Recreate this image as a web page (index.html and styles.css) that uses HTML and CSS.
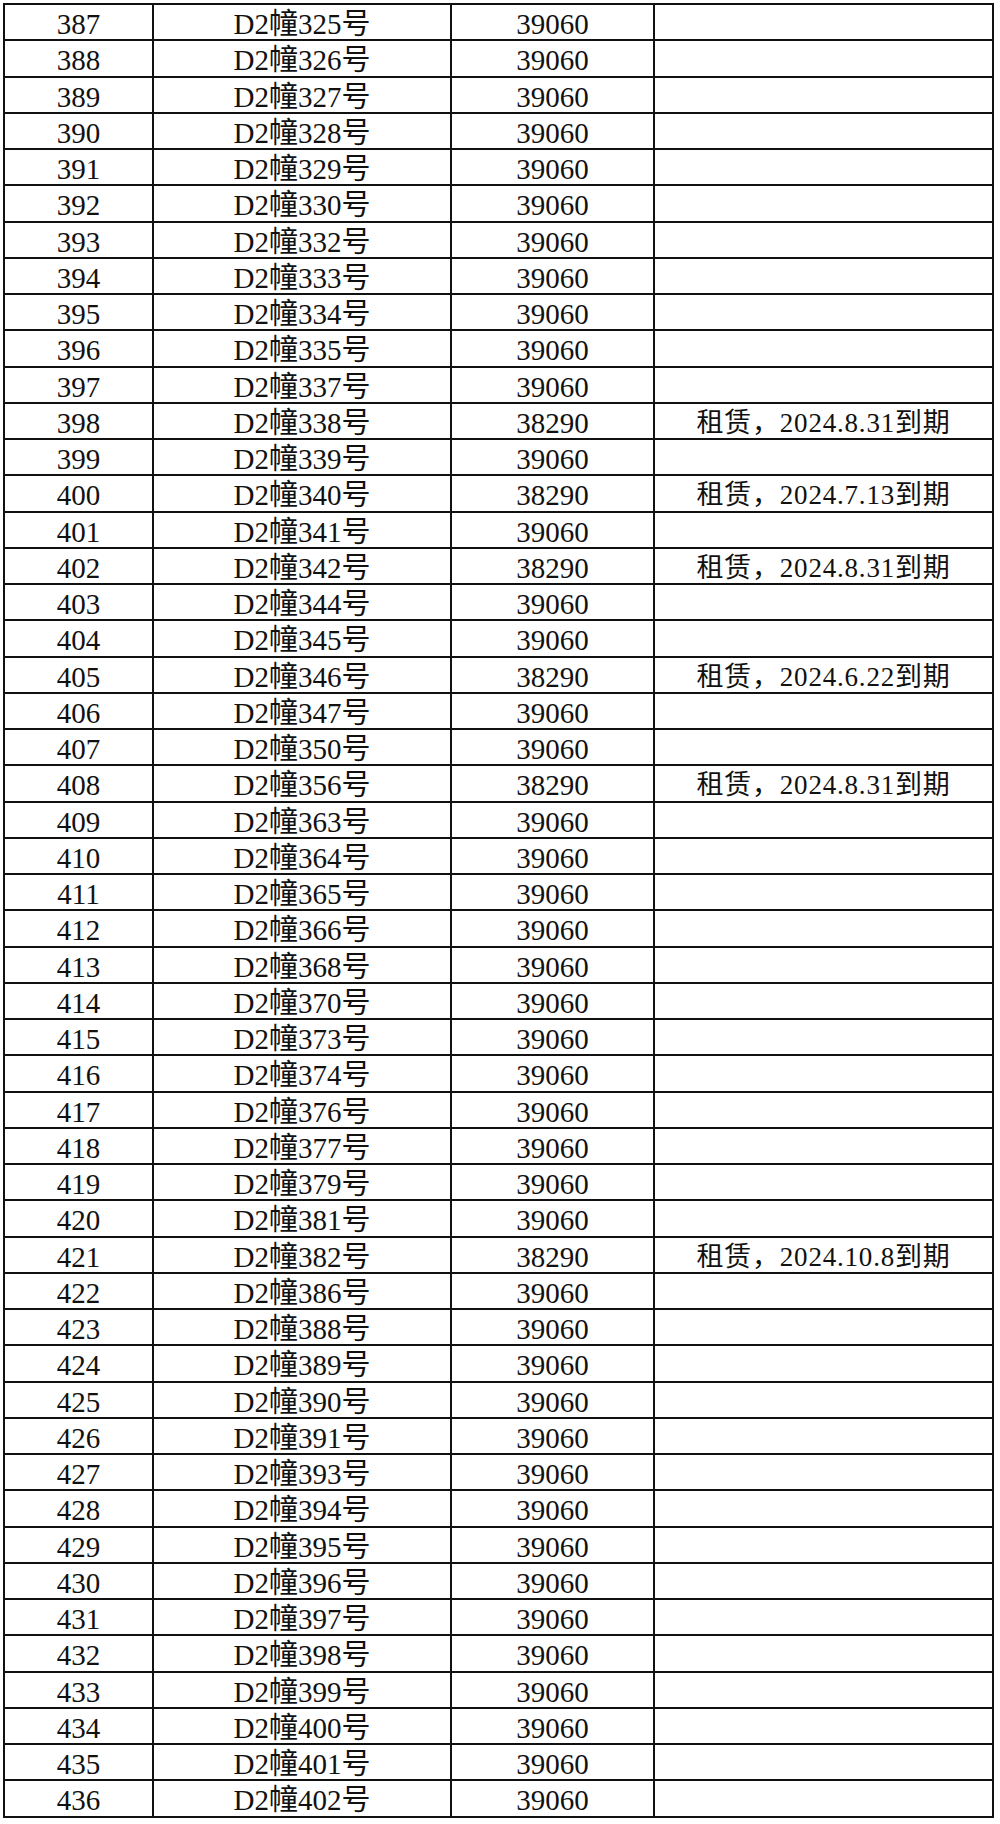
FILE: index.html
```html
<!DOCTYPE html>
<html lang="zh">
<head>
<meta charset="utf-8">
<title>D2幢</title>
<link rel="stylesheet" href="styles.css">
</head>
<body>
<table class="sheet">
<colgroup><col class="c-no"><col class="c-room"><col class="c-price"><col class="c-note"></colgroup>
<tbody>
<tr><td>387</td><td>D2幢325号</td><td>39060</td><td class="note"></td></tr>
<tr><td>388</td><td>D2幢326号</td><td>39060</td><td class="note"></td></tr>
<tr><td>389</td><td>D2幢327号</td><td>39060</td><td class="note"></td></tr>
<tr><td>390</td><td>D2幢328号</td><td>39060</td><td class="note"></td></tr>
<tr><td>391</td><td>D2幢329号</td><td>39060</td><td class="note"></td></tr>
<tr><td>392</td><td>D2幢330号</td><td>39060</td><td class="note"></td></tr>
<tr><td>393</td><td>D2幢332号</td><td>39060</td><td class="note"></td></tr>
<tr><td>394</td><td>D2幢333号</td><td>39060</td><td class="note"></td></tr>
<tr><td>395</td><td>D2幢334号</td><td>39060</td><td class="note"></td></tr>
<tr><td>396</td><td>D2幢335号</td><td>39060</td><td class="note"></td></tr>
<tr><td>397</td><td>D2幢337号</td><td>39060</td><td class="note"></td></tr>
<tr><td>398</td><td>D2幢338号</td><td>38290</td><td class="note">租赁，2024.8.31到期</td></tr>
<tr><td>399</td><td>D2幢339号</td><td>39060</td><td class="note"></td></tr>
<tr><td>400</td><td>D2幢340号</td><td>38290</td><td class="note">租赁，2024.7.13到期</td></tr>
<tr><td>401</td><td>D2幢341号</td><td>39060</td><td class="note"></td></tr>
<tr><td>402</td><td>D2幢342号</td><td>38290</td><td class="note">租赁，2024.8.31到期</td></tr>
<tr><td>403</td><td>D2幢344号</td><td>39060</td><td class="note"></td></tr>
<tr><td>404</td><td>D2幢345号</td><td>39060</td><td class="note"></td></tr>
<tr><td>405</td><td>D2幢346号</td><td>38290</td><td class="note">租赁，2024.6.22到期</td></tr>
<tr><td>406</td><td>D2幢347号</td><td>39060</td><td class="note"></td></tr>
<tr><td>407</td><td>D2幢350号</td><td>39060</td><td class="note"></td></tr>
<tr><td>408</td><td>D2幢356号</td><td>38290</td><td class="note">租赁，2024.8.31到期</td></tr>
<tr><td>409</td><td>D2幢363号</td><td>39060</td><td class="note"></td></tr>
<tr><td>410</td><td>D2幢364号</td><td>39060</td><td class="note"></td></tr>
<tr><td>411</td><td>D2幢365号</td><td>39060</td><td class="note"></td></tr>
<tr><td>412</td><td>D2幢366号</td><td>39060</td><td class="note"></td></tr>
<tr><td>413</td><td>D2幢368号</td><td>39060</td><td class="note"></td></tr>
<tr><td>414</td><td>D2幢370号</td><td>39060</td><td class="note"></td></tr>
<tr><td>415</td><td>D2幢373号</td><td>39060</td><td class="note"></td></tr>
<tr><td>416</td><td>D2幢374号</td><td>39060</td><td class="note"></td></tr>
<tr><td>417</td><td>D2幢376号</td><td>39060</td><td class="note"></td></tr>
<tr><td>418</td><td>D2幢377号</td><td>39060</td><td class="note"></td></tr>
<tr><td>419</td><td>D2幢379号</td><td>39060</td><td class="note"></td></tr>
<tr><td>420</td><td>D2幢381号</td><td>39060</td><td class="note"></td></tr>
<tr><td>421</td><td>D2幢382号</td><td>38290</td><td class="note">租赁，2024.10.8到期</td></tr>
<tr><td>422</td><td>D2幢386号</td><td>39060</td><td class="note"></td></tr>
<tr><td>423</td><td>D2幢388号</td><td>39060</td><td class="note"></td></tr>
<tr><td>424</td><td>D2幢389号</td><td>39060</td><td class="note"></td></tr>
<tr><td>425</td><td>D2幢390号</td><td>39060</td><td class="note"></td></tr>
<tr><td>426</td><td>D2幢391号</td><td>39060</td><td class="note"></td></tr>
<tr><td>427</td><td>D2幢393号</td><td>39060</td><td class="note"></td></tr>
<tr><td>428</td><td>D2幢394号</td><td>39060</td><td class="note"></td></tr>
<tr><td>429</td><td>D2幢395号</td><td>39060</td><td class="note"></td></tr>
<tr><td>430</td><td>D2幢396号</td><td>39060</td><td class="note"></td></tr>
<tr><td>431</td><td>D2幢397号</td><td>39060</td><td class="note"></td></tr>
<tr><td>432</td><td>D2幢398号</td><td>39060</td><td class="note"></td></tr>
<tr><td>433</td><td>D2幢399号</td><td>39060</td><td class="note"></td></tr>
<tr><td>434</td><td>D2幢400号</td><td>39060</td><td class="note"></td></tr>
<tr><td>435</td><td>D2幢401号</td><td>39060</td><td class="note"></td></tr>
<tr><td>436</td><td>D2幢402号</td><td>39060</td><td class="note"></td></tr>
</tbody>
</table>
</body>
</html>
```
FILE: styles.css
```css
html, body {
  margin: 0;
  padding: 0;
  background: #ffffff;
}

body {
  padding: 3px 0 0 3px;
  font-family: "Liberation Serif", "Noto Sans CJK SC", serif;
  color: #111;
}

.sheet {
  border-collapse: collapse;
  table-layout: fixed;
  width: 991px;
  border: 2px solid #111;
}

.c-no { width: 149px; }
.c-room { width: 298px; }
.c-price { width: 203px; }
.c-note { width: 339px; }

.sheet tr {
  height: 36.25px;
}

.sheet td {
  border: 2px solid #111;
  padding: 4px 0 0 0;
  text-align: center;
  vertical-align: middle;
  font-size: 29px;
  line-height: 30px;
  white-space: nowrap;
  overflow: hidden;
}

.sheet td.note {
  font-size: 27px;
  letter-spacing: 0.8px;
}
```
